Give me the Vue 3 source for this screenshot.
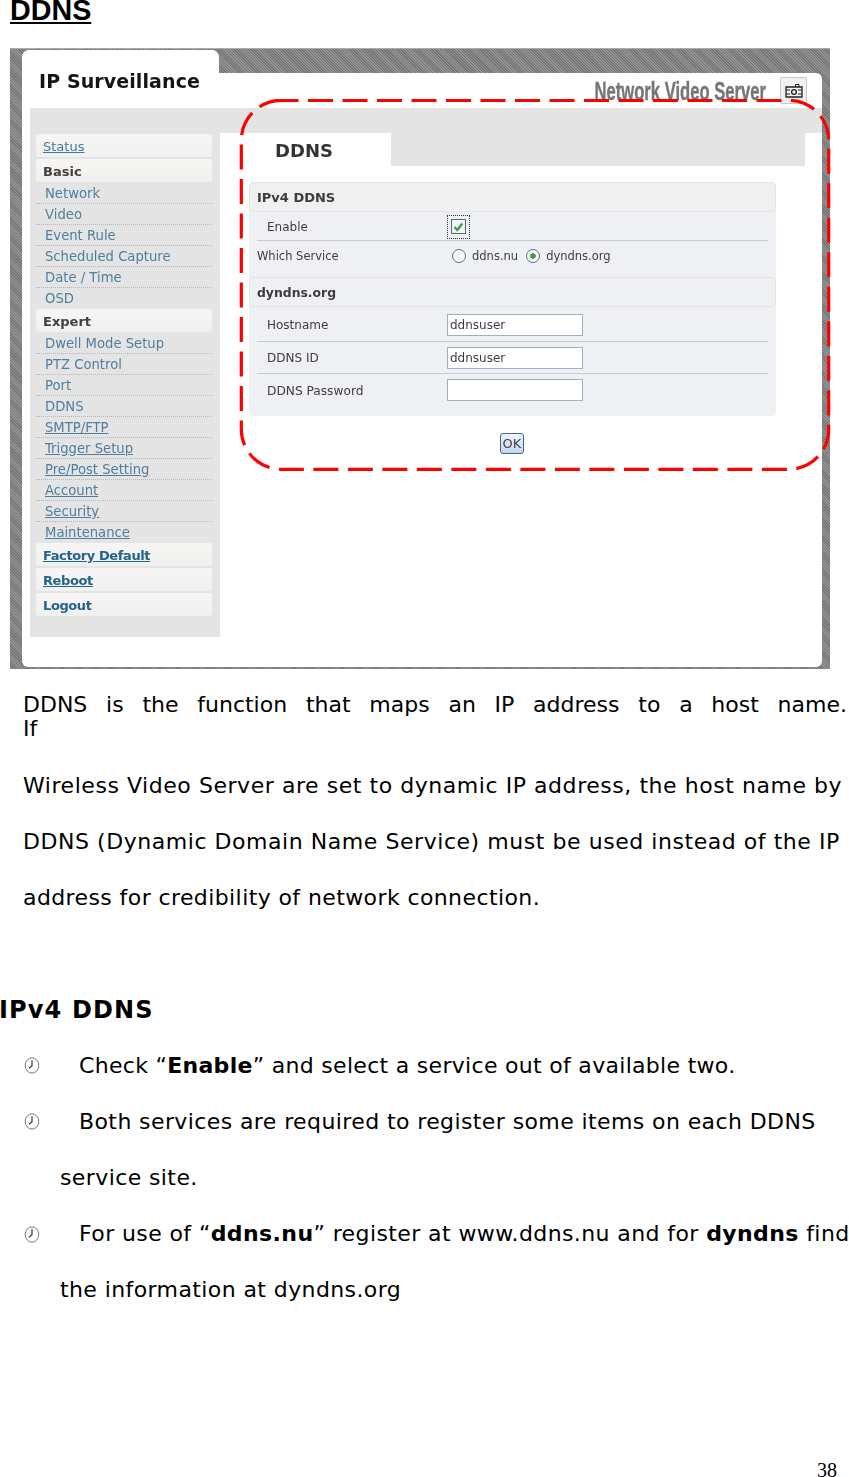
<script setup>
const basic = ['Network', 'Video', 'Event Rule', 'Scheduled Capture', 'Date / Time', 'OSD']
const expert = [
  { t: 'Dwell Mode Setup' },
  { t: 'PTZ Control' },
  { t: 'Port' },
  { t: 'DDNS' },
  { t: 'SMTP/FTP', u: true },
  { t: 'Trigger Setup', u: true },
  { t: 'Pre/Post Setting', u: true },
  { t: 'Account', u: true },
  { t: 'Security', u: true },
  { t: 'Maintenance', u: true }
]
</script>

<template>
  <div class="page">
    <h1 class="title">DDNS</h1>

    <div class="shot">
      <div class="shot-head">
        <div class="brand-tab">IP Surveillance</div>
        <div class="head-right">
          <span class="product">Network Video Server</span>
          <span class="camera">
            <svg width="18" height="15" viewBox="0 0 18 15">
              <path d="M1 4h16v10H1z" fill="none" stroke="#222" stroke-width="1.3" />
              <path d="M10.5 4V1.5h3.5V4M1 7h4M13 7h4M1 11h4M13 11h4" fill="none" stroke="#222" />
              <circle cx="9" cy="9" r="2.4" fill="none" stroke="#222" stroke-width="1.3" />
            </svg>
          </span>
        </div>
      </div>

      <div class="shot-body">
        <aside class="side">
          <a class="side-btn link u">Status</a>
          <div class="side-btn">Basic</div>
          <ul class="side-list">
            <li v-for="b in basic" :key="b"><span>{{ b }}</span></li>
          </ul>
          <div class="side-btn">Expert</div>
          <ul class="side-list">
            <li v-for="e in expert" :key="e.t"><span :class="{ u: e.u }">{{ e.t }}</span></li>
          </ul>
          <a class="side-btn link strong u">Factory Default</a>
          <a class="side-btn link strong u">Reboot</a>
          <a class="side-btn link strong">Logout</a>
        </aside>

        <main class="main">
          <div class="band-top"></div>
          <div class="band"><div class="main-tab">DDNS</div></div>

          <div class="form">
            <div class="sec-head">IPv4 DDNS</div>
            <div class="row r-enable">
              <span class="lbl">Enable</span>
              <span class="check-focus">
                <span class="check">
                  <svg width="11" height="10" viewBox="0 0 11 10">
                    <path d="M1.5 5l2.8 3 5-6.5" fill="none" stroke="#3f9a4c" stroke-width="2.2" />
                  </svg>
                </span>
              </span>
            </div>
            <div class="row r-service">
              <span class="lbl out">Which Service</span>
              <span class="radios">
                <span class="radio"></span><span class="rtext">ddns.nu</span>
                <span class="radio on"></span><span class="rtext">dyndns.org</span>
              </span>
            </div>
            <div class="sec-head narrow">dyndns.org</div>
            <div class="row r-host">
              <span class="lbl">Hostname</span>
              <span class="field">ddnsuser</span>
            </div>
            <div class="row r-id">
              <span class="lbl">DDNS ID</span>
              <span class="field">ddnsuser</span>
            </div>
            <div class="row r-pass">
              <span class="lbl">DDNS Password</span>
              <span class="field"></span>
            </div>
          </div>

          <div class="ok-wrap"><span class="ok">OK</span></div>
        </main>
      </div>
    </div>

    <svg class="callout" width="595" height="375" viewBox="0 0 595 375">
      <rect x="2.3" y="1.3" width="587.4" height="369" rx="40" fill="none" stroke="#ff0000" stroke-width="3.2" stroke-dasharray="25 9.5" stroke-dashoffset="7.8" />
    </svg>

    <div class="copy">
      <p class="just">DDNS is the function that maps an IP address to a host name.</p>
      <p class="tight">If</p>
      <p class="line wide">Wireless Video Server are set to dynamic IP address, the host name by</p>
      <p class="line wide">DDNS (Dynamic Domain Name Service) must be used instead of the IP</p>
      <p class="line">address for credibility of network connection.</p>
    </div>

    <h2 class="sub">IPv4 DDNS</h2>

    <div class="bullets">
      <p class="line b snug">
        <svg class="clock" width="16" height="17" viewBox="0 0 16 17">
          <ellipse cx="8" cy="8.5" rx="6.8" ry="7.6" fill="none" stroke="#777" stroke-width="1" />
          <path d="M8 3.2v5.6L4.8 11.4" fill="none" stroke="#222" stroke-width="1.1" />
        </svg>
        <span>Check “<b>Enable</b>” and select a service out of available two.</span>
      </p>
      <p class="line b">
        <svg class="clock" width="16" height="17" viewBox="0 0 16 17">
          <ellipse cx="8" cy="8.5" rx="6.8" ry="7.6" fill="none" stroke="#777" stroke-width="1" />
          <path d="M8 3.2v5.6L4.8 11.4" fill="none" stroke="#222" stroke-width="1.1" />
        </svg>
        <span>Both services are required to register some items on each DDNS</span>
      </p>
      <p class="line cont">service site.</p>
      <p class="line b">
        <svg class="clock" width="16" height="17" viewBox="0 0 16 17">
          <ellipse cx="8" cy="8.5" rx="6.8" ry="7.6" fill="none" stroke="#777" stroke-width="1" />
          <path d="M8 3.2v5.6L4.8 11.4" fill="none" stroke="#222" stroke-width="1.1" />
        </svg>
        <span>For use of “<b>ddns.nu</b>” register at www.ddns.nu and for <b>dyndns</b> find</span>
      </p>
      <p class="line cont">the information at dyndns.org</p>
    </div>

    <div class="page-no">38</div>
  </div>
</template>

<style>
html, body { margin: 0; background: #fff; }
</style>

<style scoped>
.page {
  position: relative;
  width: 849px;
  height: 1477px;
  overflow: hidden;
  background: #fff;
  color: #000;
  font-family: "DejaVu Sans", Verdana, sans-serif;
}
p, h1, h2, ul { margin: 0; padding: 0; }

.title {
  margin: -5px 0 0 10px;
  height: 53px;
  font: bold 28.7px/30px "Liberation Sans", Arial, sans-serif;
  text-decoration: underline;
}

.shot {
  box-sizing: border-box;
  width: 820px;
  height: 621px;
  margin-left: 10px;
  padding: 1px 8px 2px 12px;
  border-top: 1px solid #a9a9bd;
  background: repeating-linear-gradient(45deg, #757575 0 1px, #949494 1px 2px);
  display: flex;
  flex-direction: column;
  filter: blur(0.35px);
}
.shot-head { display: flex; height: 58px; flex: none; }
.brand-tab {
  box-sizing: border-box;
  width: 197px;
  padding: 20px 0 0 17px;
  background: #fff;
  border-radius: 7px 7px 0 0;
  font: bold 19px/22px "DejaVu Sans", sans-serif;
  letter-spacing: 0.1px;
  color: #151515;
}
.head-right {
  flex: 1;
  margin-top: 23px;
  background: #fff;
  border-radius: 0 6px 0 0;
  display: flex;
  justify-content: flex-end;
  align-items: flex-start;
  padding: 4px 15px 0 0;
  gap: 14px;
  overflow: hidden;
}
.product {
  font: bold 25px/28px "Liberation Sans", Arial, sans-serif;
  color: #75767a;
  white-space: nowrap;
  transform: scaleX(0.665);
  transform-origin: right center;
  -webkit-text-stroke: 0.4px #75767a;
}
.camera {
  box-sizing: border-box;
  width: 27px;
  height: 27px;
  flex: none;
  display: flex;
  align-items: center;
  justify-content: center;
  background: #f1f1f1;
  border: 1px solid #c8c8c8;
  border-radius: 2px;
}

.shot-body {
  flex: 1;
  display: flex;
  background: #fff;
  border-radius: 0 0 6px 6px;
  padding: 0 0 30px 8px;
}
.side {
  box-sizing: border-box;
  width: 190px;
  flex: none;
  background: #e4e4e4;
  padding: 26px 8px 0 6px;
}
.side-btn {
  display: block;
  box-sizing: border-box;
  height: 23px;
  margin-bottom: 2px;
  padding-left: 7px;
  background: linear-gradient(#f7f6f5, #f0f0ef);
  border-radius: 3px;
  font: bold 13px/25px "DejaVu Sans", sans-serif;
  color: #443f3d;
}
.side-btn.link { color: #3d7d9f; font-weight: 400; }
.side-btn.strong { color: #23648c; font-weight: 700; letter-spacing: -0.4px; }
.u { text-decoration: underline; }
.side-list { list-style: none; margin: -1px 0 0; padding: 0; }
.side-list li {
  box-sizing: border-box;
  height: 21px;
  padding-left: 9px;
  font-size: 13.2px;
  line-height: 21px;
  color: #4d7f9f;
  border-bottom: 1px dotted #b5b5b5;
}
.side-list li:last-child { border-bottom: 0; }

.main { flex: 1; min-width: 0; display: flex; flex-direction: column; }
.band-top { height: 25px; background: #e4e4e4; flex: none; }
.band { width: 585px; height: 33px; background: #e4e4e4; display: flex; flex: none; }
.main-tab {
  box-sizing: border-box;
  width: 171px;
  height: 33px;
  padding-left: 55px;
  background: #fff;
  font: bold 18px/35px "DejaVu Sans", sans-serif;
  color: #333;
}
.form {
  box-sizing: border-box;
  width: 527px;
  margin: 16px 0 0 29px;
  background: #eef0f3;
  border-radius: 4px;
  padding: 0 8px;
}
.sec-head {
  box-sizing: border-box;
  height: 30px;
  margin: 0 -8px;
  padding-left: 7px;
  background: #f0f0f0;
  border: 1px solid #e3e3e3;
  border-radius: 5px;
  font: bold 13px/29px "DejaVu Sans", sans-serif;
  color: #3d3b3b;
}
.sec-head.narrow { font-size: 12.4px; background: #eef0f3; }
.row {
  box-sizing: border-box;
  display: flex;
  align-items: center;
  padding-left: 10px;
  border-bottom: 1px solid #c6cbd0;
  font: 12px "DejaVu Sans", sans-serif;
  color: #403a48;
}
.r-enable { height: 29px; padding-top: 1px; }
.r-service { height: 36px; border-bottom: 0; align-items: flex-start; padding-top: 8px; }
.r-host { height: 35px; padding-top: 2px; }
.r-id { height: 32px; }
.r-pass { height: 42px; border-bottom: 0; align-items: flex-start; padding-top: 5px; }
.lbl { width: 180px; flex: none; }
.lbl.out { margin-left: -10px; width: 190px; font-size: 11.5px; }
.r-pass .lbl { line-height: 24px; font-size: 12.2px; }
.check-focus {
  box-sizing: border-box;
  width: 23px;
  height: 24px;
  border: 1px dotted #333;
  display: flex;
  align-items: center;
  justify-content: center;
}
.check {
  box-sizing: border-box;
  width: 15px;
  height: 15px;
  border: 1px solid #4f6b84;
  background: #f2f5f2;
  display: flex;
  align-items: center;
  justify-content: center;
}
.radios { display: flex; align-items: center; margin-left: 5px; }
.radio {
  box-sizing: border-box;
  width: 14px;
  height: 14px;
  border: 1px solid #59708a;
  border-radius: 50%;
  background: #f4f6f8;
}
.radio.on { background: radial-gradient(circle, #3f9a4c 0 2.5px, #f4f6f8 3px); }
.rtext { margin: 0 8px 0 6px; font-size: 11.5px; }
.field {
  box-sizing: border-box;
  width: 136px;
  height: 22px;
  padding-left: 2px;
  background: #fff;
  border: 1px solid #9db1c4;
  font-size: 12px;
  line-height: 21px;
  color: #403a48;
}
.ok-wrap { padding: 17px 0 0 280px; }
.ok {
  display: block;
  box-sizing: border-box;
  width: 24px;
  height: 21px;
  background: linear-gradient(#eef3fb, #c5d6ec);
  border: 1px solid #3d6595;
  border-radius: 3px;
  font: 13px/19px "DejaVu Sans", sans-serif;
  text-align: center;
  color: #444;
}

.callout { position: absolute; left: 239px; top: 99px; }

.copy { padding: 24px 2px 0 23px; font-size: 22px; }
.just { font-size: 22px; line-height: 24px; text-align: justify; text-align-last: justify; white-space: nowrap; }
.tight { line-height: 24px; font-size: 22px; margin-bottom: 17px; }
.line { height: 56.2px; line-height: 56.2px; font-size: 22px; letter-spacing: 0.4px; white-space: nowrap; }
.line.wide { letter-spacing: 0.55px; }
.line.snug { letter-spacing: 0.3px; }
.sub { margin: 55px 0 0 -1px; font-size: 24px; line-height: 56px; font-weight: 700; letter-spacing: 1.15px; }
.b { padding-left: 24px; display: flex; align-items: center; }
.clock { margin-right: 39px; flex: none; }
.cont { padding-left: 60px; }
.page-no {
  position: absolute;
  right: 12px;
  bottom: -5px;
  font: 20px/24px "Liberation Serif", "Times New Roman", serif;
}
</style>
